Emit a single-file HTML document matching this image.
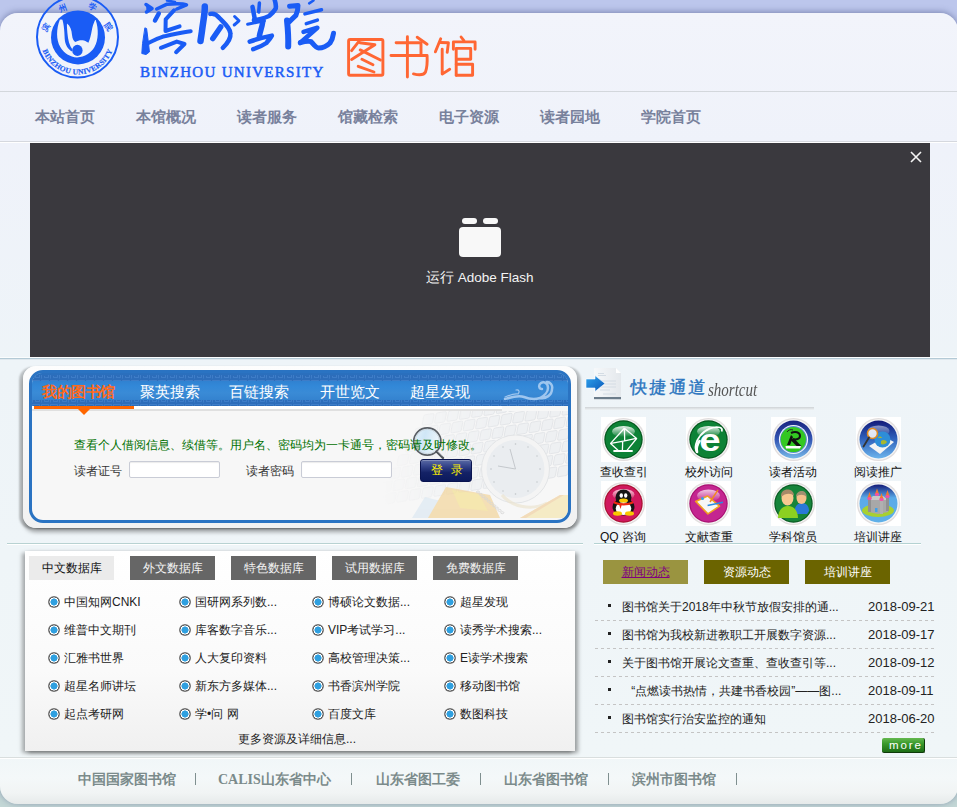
<!DOCTYPE html>
<html><head><meta charset="utf-8">
<style>
*{margin:0;padding:0;box-sizing:border-box}
html,body{width:957px;height:807px;overflow:hidden}
body{position:relative;font-family:"Liberation Sans",sans-serif;background:linear-gradient(#bcc6ec 0,#bcc6ec 300px,#c8d8dc 600px,#c3d7d6 807px)}
.abs{position:absolute}
#panel{position:absolute;left:0;top:13px;width:958px;height:791px;border-radius:18px;background:linear-gradient(#f2f4fb 0,#eff2fa 129px,#eef4f8 345px,#f0f6f8 740px,#f4f8f9 765px,#f1f4f4 780px,#e6eaea 791px);box-shadow:0 -1px 6px rgba(60,70,120,.5)}
#nav{position:absolute;left:0;top:91px;width:957px;height:52px;border-top:1px solid #d3d7dc;border-bottom:1px solid #fff;box-shadow:inset 0 -1px 0 #d5d8de}
.nv{position:absolute;top:108px;font-size:15px;font-weight:bold;color:#78819c;line-height:17px;white-space:nowrap}
#flash{position:absolute;left:30px;top:143px;width:900px;height:214px;background:#3a393e}

.t12{font-size:12px;line-height:14px;white-space:nowrap}
#login{position:absolute;left:23px;top:366px;width:554px;height:162px;border-radius:13px;background:linear-gradient(#fdfdfd,#f1f1f1);box-shadow:-4px 1px 2px rgba(0,0,0,.2),4px 1px 2px rgba(0,0,0,.2),0 4px 4px rgba(0,0,0,.35)}
#lframe{position:absolute;left:29px;top:370px;width:542px;height:153px;border:3px solid #2a73c2;border-radius:14px;background:#f7f7f7;overflow:hidden}
#lhead{position:absolute;left:0;top:0;width:536px;height:33px;background:linear-gradient(#2c78c6 0,#3288d8 40%,#3a8bd6 60%,#2f7bc9 100%)}
.lt{position:absolute;top:11px;font-size:14.5px;line-height:17px;color:#fff;white-space:nowrap}
.inp{position:absolute;height:17px;border:1px solid #c9ccd6;border-radius:2px;background:#fff;box-shadow:inset 0 1px 1px rgba(0,0,0,.08)}
.qi{position:absolute;width:45px;height:45px;background:#fff}
.ql{position:absolute;font-size:12px;line-height:14px;color:#111;white-space:nowrap}
#dbox{position:absolute;left:25px;top:551px;width:550px;height:200px;background:linear-gradient(#fff 0,#fafafa 60%,#f0f0f0 100%);box-shadow:3px 2px 4px rgba(0,0,0,.35),-3px 2px 4px rgba(0,0,0,.3)}
.dt{position:absolute;top:556px;width:85px;height:24px;background:#666;color:#f4f4f4;font-size:12px;line-height:24px;text-align:center;white-space:nowrap}
.dr{position:absolute;width:12px;height:12px;border-radius:50%;background:radial-gradient(circle,#2fa0e0 0,#2fa0e0 3.3px,#fff 3.8px,#fff 4.3px,#555 4.8px,#888 6px)}
.dl{position:absolute;font-size:12px;line-height:14px;color:#222;white-space:nowrap}
.nt{position:absolute;top:560px;width:85px;height:24px;background:#6b6400;color:#fff;font-size:12px;line-height:24px;text-align:center;white-space:nowrap}
.nr{position:absolute;left:595px;width:340px;height:1px;background:repeating-linear-gradient(90deg,#c4c4c4 0,#c4c4c4 3px,transparent 3px,transparent 6px)}
.nb{position:absolute;left:608px;width:3px;height:3px;background:#222}
.nx{position:absolute;left:622px;font-size:12px;line-height:14px;color:#222;white-space:nowrap}
.nd{position:absolute;left:868px;font-size:13px;line-height:15px;color:#222;white-space:nowrap}
.ft{position:absolute;top:772px;font-family:"Liberation Serif",serif;font-size:14px;font-weight:bold;line-height:16px;color:#7b8b8b;white-space:nowrap}
.fs{position:absolute;top:773px;width:1px;height:12px;background:#7f8f8f}
</style></head><body>
<div id="panel"></div>
<div id="nav"></div>
<div class="nv" style="left:35px">本站首页</div>
<div class="nv" style="left:136px">本馆概况</div>
<div class="nv" style="left:237px">读者服务</div>
<div class="nv" style="left:338px">馆藏检索</div>
<div class="nv" style="left:439px">电子资源</div>
<div class="nv" style="left:540px">读者园地</div>
<div class="nv" style="left:641px">学院首页</div>


<!-- logo -->
<svg class="abs" style="left:30px;top:-8px" width="100" height="92" viewBox="30 -8 100 92">
 <circle cx="77.5" cy="37" r="40.5" fill="none" stroke="#1a5cf5" stroke-width="2"/>
 <circle cx="78" cy="37.4" r="27" fill="#1a5cf5"/>
 <clipPath id="dclip"><circle cx="78" cy="37.4" r="26.5"/></clipPath><g clip-path="url(#dclip)"><path d="M59.9 19.5 C56.2 29 56 40 60.3 46.9 C64 53 70 57 77 57.4 C85 57 91 53 94.5 47 C98.5 40 98.8 29 95.7 19.9 Z" fill="#eef1fa"/>
 <path d="M61 16 C63.8 22 64.4 30 64.7 38.8 C65.1 45 67.8 49 71.8 51.5 L72.4 49.5 C69.4 45.5 68 40 67.4 33 C67 28 66.8 25.5 67 23.6 L69 16Z" fill="#1a5cf5"/>
 <path d="M67 23.6 C70.2 26 71.6 30 72 35 C72.4 39 73.8 41.2 75.6 42 C78 40.2 81 39.8 84 40.4 C86 41 87.4 42 88.4 42.8 C90 39 91 35 91.8 30.5 C92.4 27 93.2 24 95.5 19 L96 12 L63 12Z" fill="#1a5cf5"/>
 <ellipse cx="77.4" cy="50.4" rx="5.2" ry="5.6" fill="#1a5cf5"/></g>
 <g fill="#1a5cf5" font-family="Liberation Serif" font-size="7.5" font-weight="bold" stroke="#1a5cf5" stroke-width="0.2"><text x="43.53" y="52.89" transform="rotate(64.9 43.53 52.89)" text-anchor="middle">B</text><text x="45.57" y="56.67" transform="rotate(58.4 45.57 56.67)" text-anchor="middle">I</text><text x="48.15" y="60.34" transform="rotate(51.5 48.15 60.34)" text-anchor="middle">N</text><text x="51.91" y="64.41" transform="rotate(43.0 51.91 64.41)" text-anchor="middle">Z</text><text x="56.40" y="68.00" transform="rotate(34.2 56.40 68.00)" text-anchor="middle">H</text><text x="61.76" y="71.04" transform="rotate(24.8 61.76 71.04)" text-anchor="middle">O</text><text x="67.34" y="73.10" transform="rotate(15.7 67.34 73.10)" text-anchor="middle">U</text><text x="75.15" y="74.43" transform="rotate(3.6 75.15 74.43)" text-anchor="middle">U</text><text x="80.89" y="74.35" transform="rotate(-5.2 80.89 74.35)" text-anchor="middle">N</text><text x="85.33" y="73.67" transform="rotate(-12.1 85.33 73.67)" text-anchor="middle">I</text><text x="89.66" y="72.47" transform="rotate(-18.9 89.66 72.47)" text-anchor="middle">V</text><text x="94.75" y="70.30" transform="rotate(-27.4 94.75 70.30)" text-anchor="middle">E</text><text x="99.47" y="67.39" transform="rotate(-35.9 99.47 67.39)" text-anchor="middle">R</text><text x="103.40" y="64.12" transform="rotate(-43.7 103.40 64.12)" text-anchor="middle">S</text><text x="106.05" y="61.31" transform="rotate(-49.6 106.05 61.31)" text-anchor="middle">I</text><text x="108.64" y="57.89" transform="rotate(-56.1 108.64 57.89)" text-anchor="middle">T</text><text x="111.38" y="53.08" transform="rotate(-64.6 111.38 53.08)" text-anchor="middle">Y</text></g>
 <g fill="#1a5cf5" font-size="8" font-weight="bold" text-anchor="middle">
  <text x="46" y="30" transform="rotate(-55 46 27)">滨</text>
  <text x="62.5" y="11" transform="rotate(-20 62.5 8)">州</text>
  <text x="93" y="10" transform="rotate(20 93 7)">学</text>
  <text x="109" y="30" transform="rotate(55 109 27)">院</text>
 </g>
</svg>
<!-- calligraphy -->
<svg class="abs" style="left:136px;top:0" width="204" height="60" viewBox="136 0 204 60">
 <g fill="none" stroke="#1a5cf5" stroke-linecap="round" stroke-linejoin="round">
  <path d="M146 4.5 L152 8.5 L146.5 12" stroke-width="3.5" fill="#1a5cf5"/>
  <path d="M158.8 13.5 L155 20.5" stroke-width="4.5"/>
  <path d="M145.2 28 L146.6 28.5 L148.6 44 L149.4 52 L146 54.5 L141.8 53.5 L142.5 44Z" stroke-width="1" fill="#1a5cf5"/>
  <path d="M148.4 43 C155 40 160 37 165.7 36 C175 34 183 32 190.7 31.2" stroke-width="4"/>
  <path d="M167 0.5 L175 2"  stroke-width="2.5"/>
  <path d="M156.7 9 L167 4.2 C176 3.5 183 3.5 186.5 4.9 L176.8 9" stroke-width="3.5"/>
  <path d="M174 10.4 L165.7 19.4 L165.5 31 L179.6 26.4" stroke-width="4"/>
  <path d="M160.9 47.8 L176.8 41.6 L184.5 44 L176.1 52.2" stroke-width="4"/>
  <path d="M204.8 6.5 C205 14 203 22 202 31 L200.5 41" stroke-width="6.5"/>
  <path d="M210.3 13.9 C214 13 217 15 219.4 18 C225 24 230 28 230.4 33.3 C231 38 229 42 222.8 47.8" stroke-width="4.5"/>
  <path d="M220.7 27 L212.8 38.5" stroke-width="5.5"/>
  <path d="M234.6 16.5 L239 20.8 L234.2 25" stroke-width="3"/>
  <path d="M252.5 6.9 L254.6 18" stroke-width="4.5"/>
  <path d="M259.4 3 L258.7 12" stroke-width="3.5"/>
  <path d="M274.7 0 C276 4 276 8 275.4 9 C273 13 270 15 269.1 16 C262 19 257 20 253.9 20.1" stroke-width="4.5"/>
  <path d="M247.6 24.3 L264.3 20.8" stroke-width="3"/>
  <path d="M262.9 21 C262 28 260 32 259.4 36" stroke-width="5.5"/>
  <path d="M249.7 41.6 C257 39 265 37 271.9 35.6 C270 39 268 41 266.4 43 C262 46 257 48 253.2 49.2" stroke-width="4.5"/>
  <path d="M289.6 6.2 L298 5.5 C298 10 297 13 295.9 15.3 C293 18 291 20 289.6 21.5" stroke-width="5"/>
  <path d="M287 20.5 C288 30 288.5 38 288.2 46.5" stroke-width="6"/>
  <path d="M313.5 0.5 L309.2 3.4" stroke-width="2.5"/>
  <path d="M304.9 13.9 L321.5 9.7" stroke-width="3.5"/>
  <path d="M306.3 23.6 L317.4 20.1" stroke-width="3.5"/>
  <path d="M303.5 31.9 L317.4 27.7 L300 43" stroke-width="4.5"/>
  <path d="M300.5 42.5 C306 41 309 41 311.1 41.6 C314 45 316 48 318.5 48 C323 48 327 46 330 43 C332 40 333 37 333.5 33.3" stroke-width="5"/>
 </g>
</svg>
<div class="abs" style="left:140px;top:64px;font-family:'Liberation Serif',serif;font-size:15px;line-height:17px;color:#1a5cf5;letter-spacing:1.3px;-webkit-text-stroke:0.5px #1a5cf5;white-space:nowrap">BINZHOU UNIVERSITY</div>
<svg class="abs" style="left:340px;top:30px" width="145" height="52" viewBox="340 30 145 52">
 <g fill="none" stroke="#ff6633" stroke-width="2.9" stroke-linecap="round" stroke-linejoin="round">
  <rect x="348.6" y="39.5" width="34.3" height="35.8" rx="1.5"/>
  <path d="M358.9 41.4 L351.6 50.6"/>
  <path d="M359.9 42.8 L374.9 44.7 L351.6 59.5"/>
  <path d="M360.2 49.9 L380.4 60"/>
  <path d="M361.9 59.3 L373 64.7"/>
  <path d="M358.2 66.3 L374 72"/>
  <path d="M396.1 42.8 H421 V55.5"/>
  <path d="M391 55.5 H427.1 C427.4 62 427 68 425.5 72 C424 75 420 75.5 413.5 73.9"/>
  <path d="M407.4 36.7 V77.1"/>
  <path d="M417.2 37.2 L427.1 44.2"/>
  <path d="M440.7 38.8 L435.4 51.8"/>
  <path d="M440.7 42.5 L448.4 42.8 L447.2 52.4"/>
  <path d="M442.2 49.3 V74.1 L449.7 69.2"/>
  <path d="M461.1 37 L463.9 40.7"/>
  <path d="M453.4 49.3 V41.9 H475.1 V49.3"/>
  <path d="M456.2 75.3 V48.4 H470.7 V59.2 H456.2"/>
  <path d="M456.2 64.2 H472.6 V75.3 H456.2"/>
 </g>
</svg>
<div class="abs" style="left:0;top:357px;width:957px;height:1px;background:#fbfdfe"></div><div class="abs" style="left:0;top:358px;width:957px;height:1px;background:#b4cad6"></div><div class="abs" style="left:0;top:359px;width:957px;height:1px;background:#dfe8ee"></div>
<div id="flash">
 <div class="abs" style="left:429px;top:84px;width:42px;height:30px;border-radius:4px;background:#f8f8f8"></div>
 <div class="abs" style="left:432px;top:75px;width:15px;height:6px;border-radius:3px;background:#f8f8f8"></div>
 <div class="abs" style="left:453px;top:75px;width:15px;height:6px;border-radius:3px;background:#f8f8f8"></div>
 <div class="abs" style="left:396px;top:127px;font-size:13.5px;line-height:16px;color:#f4f4f4;white-space:nowrap">运行 Adobe Flash</div>
 <svg class="abs" style="left:880px;top:8px" width="12" height="12" viewBox="0 0 12 12"><path d="M1 1L11 11M11 1L1 11" stroke="#f4f4f4" stroke-width="1.6"/></svg>
</div>


<!-- login -->
<div id="login"></div>
<div id="lframe">
 <div id="lhead">
  <svg class="abs" style="left:0;top:0" width="536" height="33">
   <defs>
    <pattern id="mea" width="9" height="6" patternUnits="userSpaceOnUse">
     <rect width="9" height="6" fill="#2d6dba"/><path d="M0.5 5.5V1.5H7.5V4.5H3.5V3" fill="none" stroke="#4282cc" stroke-width="0.8"/>
    </pattern>
   </defs>
   <rect x="0" y="0" width="536" height="2" fill="#2a6fbd"/>
   <rect x="0" y="2" width="536" height="6" fill="url(#mea)"/>
   <rect x="0" y="27" width="536" height="6" fill="url(#mea)"/>
   <path d="M473 26 C480 24 486 22 492 24 C497 26 502 27 508 25 C512 23 516 19 516 15 C516 10 512 8 509 10 C506 12 507 16 510 16 M508 25 C514 26 520 22 520 16 C521 12 518 9 515 9" fill="none" stroke="#9ec6ef" stroke-width="2.5" stroke-linecap="round"/>
   <path d="M473 24 C478 22 482 20 486 21 C488 19 487 16 484 17" fill="none" stroke="#9ec6ef" stroke-width="1.2" stroke-linecap="round"/>
  </svg>
  <div class="lt" style="left:10px;top:11px;color:#ff6a1a;font-weight:bold;letter-spacing:-0.4px">我的图书馆</div>
  <div class="lt" style="left:108px">聚英搜索</div>
  <div class="lt" style="left:197px">百链搜索</div>
  <div class="lt" style="left:288px">开世览文</div>
  <div class="lt" style="left:378px">超星发现</div>
 </div>
 <div class="abs" style="left:0;top:33px;width:470px;height:3px;background:#fff"></div>
 <div class="abs" style="left:0;top:36px;width:470px;height:2px;background:#e0e0e0"></div>
 <div class="abs" style="left:2px;top:33px;width:100px;height:3px;background:#ff6600"></div>
 <div class="abs" style="left:46px;top:36px;width:0;height:0;border-left:6px solid transparent;border-right:6px solid transparent;border-top:6px solid #ff6600"></div>
 <!-- background picture -->
 <svg class="abs" style="left:0;top:38px" width="536" height="115">
  <defs><linearGradient id="kbm" gradientUnits="userSpaceOnUse" x1="350" y1="0" x2="470" y2="0"><stop offset="0" stop-color="#fff" stop-opacity="0"/><stop offset="1" stop-color="#fff" stop-opacity="1"/></linearGradient><mask id="kmask"><rect x="0" y="0" width="536" height="115" fill="url(#kbm)"/></mask></defs>
  <g mask="url(#kmask)"><g transform="translate(392 4) rotate(-9) skewX(-20)" fill="#eef0f2" stroke="#e0e3e6" stroke-width="0.8"><rect x="0.0" y="0" width="10.5" height="10" rx="1.5"/><rect x="12.5" y="0" width="10.5" height="10" rx="1.5"/><rect x="25.0" y="0" width="10.5" height="10" rx="1.5"/><rect x="37.5" y="0" width="10.5" height="10" rx="1.5"/><rect x="50.0" y="0" width="10.5" height="10" rx="1.5"/><rect x="62.5" y="0" width="10.5" height="10" rx="1.5"/><rect x="75.0" y="0" width="10.5" height="10" rx="1.5"/><rect x="87.5" y="0" width="10.5" height="10" rx="1.5"/><rect x="100.0" y="0" width="10.5" height="10" rx="1.5"/><rect x="112.5" y="0" width="10.5" height="10" rx="1.5"/><rect x="125.0" y="0" width="10.5" height="10" rx="1.5"/><rect x="137.5" y="0" width="10.5" height="10" rx="1.5"/><rect x="150.0" y="0" width="10.5" height="10" rx="1.5"/><rect x="162.5" y="0" width="10.5" height="10" rx="1.5"/><rect x="175.0" y="0" width="10.5" height="10" rx="1.5"/><rect x="187.5" y="0" width="10.5" height="10" rx="1.5"/><rect x="-6.0" y="12" width="10.5" height="10" rx="1.5"/><rect x="6.5" y="12" width="10.5" height="10" rx="1.5"/><rect x="19.0" y="12" width="10.5" height="10" rx="1.5"/><rect x="31.5" y="12" width="10.5" height="10" rx="1.5"/><rect x="44.0" y="12" width="10.5" height="10" rx="1.5"/><rect x="56.5" y="12" width="10.5" height="10" rx="1.5"/><rect x="69.0" y="12" width="10.5" height="10" rx="1.5"/><rect x="81.5" y="12" width="10.5" height="10" rx="1.5"/><rect x="94.0" y="12" width="10.5" height="10" rx="1.5"/><rect x="106.5" y="12" width="10.5" height="10" rx="1.5"/><rect x="119.0" y="12" width="10.5" height="10" rx="1.5"/><rect x="131.5" y="12" width="10.5" height="10" rx="1.5"/><rect x="144.0" y="12" width="10.5" height="10" rx="1.5"/><rect x="156.5" y="12" width="10.5" height="10" rx="1.5"/><rect x="169.0" y="12" width="10.5" height="10" rx="1.5"/><rect x="181.5" y="12" width="10.5" height="10" rx="1.5"/><rect x="-12.0" y="24" width="10.5" height="10" rx="1.5"/><rect x="0.5" y="24" width="10.5" height="10" rx="1.5"/><rect x="13.0" y="24" width="10.5" height="10" rx="1.5"/><rect x="25.5" y="24" width="10.5" height="10" rx="1.5"/><rect x="38.0" y="24" width="10.5" height="10" rx="1.5"/><rect x="50.5" y="24" width="10.5" height="10" rx="1.5"/><rect x="63.0" y="24" width="10.5" height="10" rx="1.5"/><rect x="75.5" y="24" width="10.5" height="10" rx="1.5"/><rect x="88.0" y="24" width="10.5" height="10" rx="1.5"/><rect x="100.5" y="24" width="10.5" height="10" rx="1.5"/><rect x="113.0" y="24" width="10.5" height="10" rx="1.5"/><rect x="125.5" y="24" width="10.5" height="10" rx="1.5"/><rect x="138.0" y="24" width="10.5" height="10" rx="1.5"/><rect x="150.5" y="24" width="10.5" height="10" rx="1.5"/><rect x="163.0" y="24" width="10.5" height="10" rx="1.5"/><rect x="175.5" y="24" width="10.5" height="10" rx="1.5"/><rect x="-18.0" y="36" width="10.5" height="10" rx="1.5"/><rect x="-5.5" y="36" width="10.5" height="10" rx="1.5"/><rect x="7.0" y="36" width="10.5" height="10" rx="1.5"/><rect x="19.5" y="36" width="10.5" height="10" rx="1.5"/><rect x="32.0" y="36" width="10.5" height="10" rx="1.5"/><rect x="44.5" y="36" width="10.5" height="10" rx="1.5"/><rect x="57.0" y="36" width="10.5" height="10" rx="1.5"/><rect x="69.5" y="36" width="10.5" height="10" rx="1.5"/><rect x="82.0" y="36" width="10.5" height="10" rx="1.5"/><rect x="94.5" y="36" width="10.5" height="10" rx="1.5"/><rect x="107.0" y="36" width="10.5" height="10" rx="1.5"/><rect x="119.5" y="36" width="10.5" height="10" rx="1.5"/><rect x="132.0" y="36" width="10.5" height="10" rx="1.5"/><rect x="144.5" y="36" width="10.5" height="10" rx="1.5"/><rect x="157.0" y="36" width="10.5" height="10" rx="1.5"/><rect x="169.5" y="36" width="10.5" height="10" rx="1.5"/><rect x="-24.0" y="48" width="10.5" height="10" rx="1.5"/><rect x="-11.5" y="48" width="10.5" height="10" rx="1.5"/><rect x="1.0" y="48" width="10.5" height="10" rx="1.5"/><rect x="13.5" y="48" width="10.5" height="10" rx="1.5"/><rect x="26.0" y="48" width="10.5" height="10" rx="1.5"/><rect x="38.5" y="48" width="10.5" height="10" rx="1.5"/><rect x="51.0" y="48" width="10.5" height="10" rx="1.5"/><rect x="63.5" y="48" width="10.5" height="10" rx="1.5"/><rect x="76.0" y="48" width="10.5" height="10" rx="1.5"/><rect x="88.5" y="48" width="10.5" height="10" rx="1.5"/><rect x="101.0" y="48" width="10.5" height="10" rx="1.5"/><rect x="113.5" y="48" width="10.5" height="10" rx="1.5"/><rect x="126.0" y="48" width="10.5" height="10" rx="1.5"/><rect x="138.5" y="48" width="10.5" height="10" rx="1.5"/><rect x="151.0" y="48" width="10.5" height="10" rx="1.5"/><rect x="163.5" y="48" width="10.5" height="10" rx="1.5"/><rect x="-30.0" y="60" width="10.5" height="10" rx="1.5"/><rect x="-17.5" y="60" width="10.5" height="10" rx="1.5"/><rect x="-5.0" y="60" width="10.5" height="10" rx="1.5"/><rect x="7.5" y="60" width="10.5" height="10" rx="1.5"/><rect x="20.0" y="60" width="10.5" height="10" rx="1.5"/><rect x="32.5" y="60" width="10.5" height="10" rx="1.5"/><rect x="45.0" y="60" width="10.5" height="10" rx="1.5"/><rect x="57.5" y="60" width="10.5" height="10" rx="1.5"/><rect x="70.0" y="60" width="10.5" height="10" rx="1.5"/><rect x="82.5" y="60" width="10.5" height="10" rx="1.5"/><rect x="95.0" y="60" width="10.5" height="10" rx="1.5"/><rect x="107.5" y="60" width="10.5" height="10" rx="1.5"/><rect x="120.0" y="60" width="10.5" height="10" rx="1.5"/><rect x="132.5" y="60" width="10.5" height="10" rx="1.5"/><rect x="145.0" y="60" width="10.5" height="10" rx="1.5"/><rect x="157.5" y="60" width="10.5" height="10" rx="1.5"/><rect x="-36.0" y="72" width="10.5" height="10" rx="1.5"/><rect x="-23.5" y="72" width="10.5" height="10" rx="1.5"/><rect x="-11.0" y="72" width="10.5" height="10" rx="1.5"/><rect x="1.5" y="72" width="10.5" height="10" rx="1.5"/><rect x="14.0" y="72" width="10.5" height="10" rx="1.5"/><rect x="26.5" y="72" width="10.5" height="10" rx="1.5"/><rect x="39.0" y="72" width="10.5" height="10" rx="1.5"/><rect x="51.5" y="72" width="10.5" height="10" rx="1.5"/><rect x="64.0" y="72" width="10.5" height="10" rx="1.5"/><rect x="76.5" y="72" width="10.5" height="10" rx="1.5"/><rect x="89.0" y="72" width="10.5" height="10" rx="1.5"/><rect x="101.5" y="72" width="10.5" height="10" rx="1.5"/><rect x="114.0" y="72" width="10.5" height="10" rx="1.5"/><rect x="126.5" y="72" width="10.5" height="10" rx="1.5"/><rect x="139.0" y="72" width="10.5" height="10" rx="1.5"/><rect x="151.5" y="72" width="10.5" height="10" rx="1.5"/></g></g>
  <circle cx="483.5" cy="58" r="34" fill="#f4f4f4" stroke="#e2e4e6" stroke-width="1"/>
  <circle cx="483.5" cy="58" r="29" fill="#eaedf0"/>
  <path d="M483.5 58 L478 38 M483.5 58 L466 55" stroke="#c4c8cc" stroke-width="1"/>
  <g fill="#c0c4c8"><circle cx="483.5" cy="33" r="0.8"/><circle cx="508" cy="58" r="0.8"/><circle cx="483.5" cy="83" r="0.8"/><circle cx="459" cy="58" r="0.8"/><circle cx="496" cy="36" r="0.7"/><circle cx="505" cy="45" r="0.7"/><circle cx="505" cy="71" r="0.7"/><circle cx="496" cy="80" r="0.7"/><circle cx="471" cy="80" r="0.7"/><circle cx="462" cy="71" r="0.7"/><circle cx="462" cy="45" r="0.7"/><circle cx="471" cy="36" r="0.7"/></g>
  <defs><filter id="soft"><feGaussianBlur stdDeviation="0.7"/></filter></defs><g opacity="0.7" filter="url(#soft)"><path d="M380 107 L393 86 L428 95 L423 107Z" fill="#dce8f2"/>
  <path d="M396 107 L414 76 L458 84 L468 107Z" fill="#f2d49a"/>
  <path d="M420 79 L447 83 L456 100 L428 97Z" fill="#f4e090"/>
  <ellipse cx="446.0" cy="81.0" rx="1.6" ry="1" fill="none" stroke="#c8c8c8" stroke-width="0.8"/><ellipse cx="448.7" cy="83.3" rx="1.6" ry="1" fill="none" stroke="#c8c8c8" stroke-width="0.8"/><ellipse cx="451.4" cy="85.6" rx="1.6" ry="1" fill="none" stroke="#c8c8c8" stroke-width="0.8"/><ellipse cx="454.1" cy="87.9" rx="1.6" ry="1" fill="none" stroke="#c8c8c8" stroke-width="0.8"/><ellipse cx="456.8" cy="90.2" rx="1.6" ry="1" fill="none" stroke="#c8c8c8" stroke-width="0.8"/><ellipse cx="459.5" cy="92.5" rx="1.6" ry="1" fill="none" stroke="#c8c8c8" stroke-width="0.8"/><ellipse cx="462.2" cy="94.8" rx="1.6" ry="1" fill="none" stroke="#c8c8c8" stroke-width="0.8"/><ellipse cx="464.9" cy="97.1" rx="1.6" ry="1" fill="none" stroke="#c8c8c8" stroke-width="0.8"/><ellipse cx="467.6" cy="99.4" rx="1.6" ry="1" fill="none" stroke="#c8c8c8" stroke-width="0.8"/><ellipse cx="470.3" cy="101.7" rx="1.6" ry="1" fill="none" stroke="#c8c8c8" stroke-width="0.8"/>
  <path d="M470 84 C480 96 500 100 515 92" fill="none" stroke="#ece4d0" stroke-width="3"/>
  <path d="M488 107 L528 84 L536 84 L536 107Z" fill="#f4e6b0"/>
  <path d="M488 107 L528 84 L532 84 L494 107Z" fill="#f0cfa0"/></g>
 </svg>
</div>
<svg class="abs" style="left:408px;top:422px" width="42" height="42">
 <defs><linearGradient id="mg" x1="0" y1="0" x2="1" y2="0.3"><stop offset="0" stop-color="#e6f4fc"/><stop offset="0.45" stop-color="#cfe6f6"/><stop offset="1" stop-color="#eef6fb"/></linearGradient></defs>
 <circle cx="19.3" cy="19.5" r="13.6" fill="url(#mg)" stroke="#5a5e64" stroke-width="1.6"/>
 <circle cx="19.3" cy="19.5" r="12.2" fill="none" stroke="#c8d0d8" stroke-width="0.8"/>
 <path d="M28.5 29.5 L35 36" stroke="#50545a" stroke-width="2.4" stroke-linecap="round"/>
 <path d="M29.5 29 L35 34.5" stroke="#e0e4e8" stroke-width="0.7"/>
</svg>
<div class="t12 abs" style="left:74px;top:438px;color:#007000">查看个人借阅信息、续借等。用户名、密码均为一卡通号，密码请及时修改。</div>
<div class="t12 abs" style="left:74px;top:464px;color:#333">读者证号</div>
<div class="t12 abs" style="left:246px;top:464px;color:#333">读者密码</div>
<div class="inp" style="left:129px;top:461px;width:91px"></div>
<div class="inp" style="left:301px;top:461px;width:91px"></div>

<div class="abs" style="left:420px;top:459px;width:52px;height:23px;border:1px solid #0a1450;border-radius:3px;background:linear-gradient(#5a6aa4 0,#34448a 30%,#142266 60%,#0c1a5c 100%);box-shadow:inset 0 1px 0 rgba(255,255,255,.25);color:#fff200;font-size:12px;line-height:21px;text-align:left;white-space:nowrap;letter-spacing:8px;padding-left:10px">登录</div>

<!-- quick links -->
<svg class="abs" style="left:585px;top:367px" width="38" height="34">
 <defs><linearGradient id="arw" x1="0" y1="0" x2="1" y2="1"><stop offset="0" stop-color="#2ea4ee"/><stop offset="1" stop-color="#0a56b8"/></linearGradient>
 <linearGradient id="pg" x1="0" y1="0" x2="1" y2="0"><stop offset="0" stop-color="#f6f8fa"/><stop offset="1" stop-color="#e4e8ec"/></linearGradient></defs>
 <path d="M9 1 H31 L36 6 V33 H9Z" fill="url(#pg)"/>
 <path d="M31 1 L36 6 H31Z" fill="#fff"/>
 <rect x="9" y="30" width="27" height="2.2" fill="#6c7c8a"/>
 <path d="M13 6.5H19M13 8.5H21M16 14H31M16 17H31M16 20H31M15 23H25M18 27H31" stroke="#d4dce4" stroke-width="1.2"/>
 <path d="M1 12 H10 V8.6 L20 16.6 L10 24.5 V21 H1Z" fill="url(#arw)" stroke="#fff" stroke-width="0.6"/>
</svg>
<div class="abs" style="left:630px;top:377px;font-size:17px;line-height:22px;color:#2a74bf;-webkit-text-stroke:0.4px #2a74bf;letter-spacing:2.5px;white-space:nowrap;transform:skewX(-4deg)">快捷通道</div>
<div class="abs" style="left:708px;top:382px;font-family:'Liberation Serif',serif;font-style:italic;font-size:15px;line-height:18px;transform:scaleY(1.25);transform-origin:0 80%;color:#555;white-space:nowrap">shortcut</div>
<div class="abs" style="left:585px;top:407px;width:229px;height:3px;background:linear-gradient(#cfd3d6,#eef2f4)"></div>
<svg class="qi" style="left:601px;top:417px" width="45" height="45"><rect width="45" height="45" fill="#fff"/><circle cx="22.5" cy="22.5" r="21.6" fill="#e2dede"/><circle cx="22.5" cy="22.5" r="20.2" fill="#f6f6f6"/><circle cx="22.5" cy="22.5" r="19.2" fill="#05561d"/><circle cx="22.5" cy="22.5" r="18" fill="#0d8236"/><defs><linearGradient id="h1" x1="0" y1="0" x2="0" y2="1"><stop offset="0" stop-color="#fff" stop-opacity="0.9"/><stop offset="1" stop-color="#fff" stop-opacity="0"/></linearGradient></defs><ellipse cx="22.5" cy="14.5" rx="11.5" ry="5.5" fill="url(#h1)"/>
<g fill="none" stroke="#fff" stroke-width="1.3" stroke-linejoin="round">
<path d="M23.4 11.2 L35.6 21.5 L26 33.3 M23.4 11.2 L9.6 26.4 L17 33.3"/>
<path d="M23.4 11.2 L23.7 23.8 L35.2 21.4 M10 26.3 L23.7 23.8 M21.7 24.5 L21.4 33.3"/>
</g><rect x="12.4" y="33" width="19.3" height="2" fill="#fff"/></svg>
<div class="ql" style="left:600px;top:465px">查收查引</div>
<svg class="qi" style="left:686px;top:417px" width="45" height="45"><rect width="45" height="45" fill="#fff"/><circle cx="22.5" cy="22.5" r="21.6" fill="#e2dede"/><circle cx="22.5" cy="22.5" r="20.2" fill="#f6f6f6"/><circle cx="22.5" cy="22.5" r="19.2" fill="#05561d"/><circle cx="22.5" cy="22.5" r="18" fill="#0d8236"/><defs><linearGradient id="h2" x1="0" y1="0" x2="0" y2="1"><stop offset="0" stop-color="#fff" stop-opacity="0.9"/><stop offset="1" stop-color="#fff" stop-opacity="0"/></linearGradient></defs><ellipse cx="22.5" cy="14.5" rx="11.5" ry="5.5" fill="url(#h2)"/>
<path d="M11 35 C8 31 10 24 14 19 C19 12 28 9 34 10.5 C36 11 36.5 13 35.5 14.5" fill="none" stroke="#fff" stroke-width="1.8"/>
<path d="M11 35 C10 31 11.5 27 13.5 24" fill="none" stroke="#fff" stroke-width="2.6" stroke-linecap="round"/>
<text x="0" y="0" transform="translate(24 33.5) scale(1.2 1)" font-family="Liberation Sans" font-weight="bold" font-size="32" fill="#fff" text-anchor="middle">e</text></svg>
<div class="ql" style="left:685px;top:465px">校外访问</div>
<svg class="qi" style="left:771px;top:417px" width="45" height="45"><rect width="45" height="45" fill="#fff"/><circle cx="22.5" cy="22.5" r="21.6" fill="#e2dede"/><circle cx="22.5" cy="22.5" r="20.2" fill="#f6f6f6"/>
<defs><linearGradient id="g3" x1="0" y1="0" x2="0" y2="1"><stop offset="0" stop-color="#1a2480"/><stop offset="0.5" stop-color="#3456b4"/><stop offset="1" stop-color="#78b8e8"/></linearGradient></defs>
<circle cx="22.5" cy="22.5" r="19" fill="url(#g3)"/>
<circle cx="22.5" cy="22.5" r="14.6" fill="#f2f6fb"/><circle cx="22.5" cy="22.5" r="13.4" fill="#5a8ed0"/>
<circle cx="22.3" cy="22.5" r="12.6" fill="#33c822"/>
<path d="M16 28 L20 18 L22 20 L19 28Z" fill="#111"/>
<path d="M20 16 C24 14 29 15 29 19 C29 22 25 23 22 22 L28 28 L26 28 L20 22" fill="none" stroke="#111" stroke-width="2"/>
<path d="M16 15 C17 13 20 12 22 13" fill="none" stroke="#222" stroke-width="1"/>
<path d="M14.5 29 H30 L29 31.5 H15Z" fill="#fff"/></svg>
<div class="ql" style="left:769px;top:465px">读者活动</div>
<svg class="qi" style="left:856px;top:417px" width="45" height="45"><rect width="45" height="45" fill="#fff"/><circle cx="22.5" cy="22.5" r="21.6" fill="#e2dede"/><circle cx="22.5" cy="22.5" r="20.2" fill="#f6f6f6"/>
<defs><linearGradient id="g4" x1="0" y1="0" x2="0" y2="1"><stop offset="0" stop-color="#141a78"/><stop offset="0.45" stop-color="#2c5cb8"/><stop offset="1" stop-color="#6cb4ec"/></linearGradient></defs>
<circle cx="22.5" cy="22.5" r="19" fill="url(#g4)"/>
<defs><linearGradient id="h4" x1="0" y1="0" x2="0" y2="1"><stop offset="0" stop-color="#fff" stop-opacity="0.5"/><stop offset="1" stop-color="#fff" stop-opacity="0"/></linearGradient></defs><ellipse cx="22.5" cy="14" rx="11" ry="5.5" fill="url(#h4)"/>
<path d="M13 29 L29 20 L38 25 L24 37Z" fill="#f4f4f4"/>
<circle cx="26.5" cy="22.5" r="8" fill="#2e8ed8"/>
<path d="M25 24 C27 22 30 23 31 25 C30 27 27 28 25 27Z M22 21 C23 19 25 19 26 21" fill="#a8b830"/>
<circle cx="16.5" cy="16.5" r="5" fill="rgba(255,255,255,.85)" stroke="#e08a20" stroke-width="1.6"/>
<path d="M13 20.5 L7.5 29.5" stroke="#333" stroke-width="1.8" stroke-linecap="round"/></svg>
<div class="ql" style="left:854px;top:465px">阅读推广</div>
<svg class="qi" style="left:601px;top:481px" width="45" height="45"><rect width="45" height="45" fill="#fff"/><circle cx="22.5" cy="22.5" r="21.6" fill="#e2dede"/><circle cx="22.5" cy="22.5" r="20.2" fill="#f6f6f6"/><circle cx="22.5" cy="22.5" r="19.2" fill="#a81030"/><circle cx="22.5" cy="22.5" r="18" fill="#d0185e"/><defs><linearGradient id="h5" x1="0" y1="0" x2="0" y2="1"><stop offset="0" stop-color="#fff" stop-opacity="0.8"/><stop offset="1" stop-color="#fff" stop-opacity="0"/></linearGradient></defs><ellipse cx="22.5" cy="13.5" rx="11" ry="5.5" fill="url(#h5)"/>
<ellipse cx="22.5" cy="26" rx="11" ry="8.5" fill="#151515"/>
<ellipse cx="22.5" cy="16.5" rx="8" ry="8" fill="#151515"/>
<ellipse cx="22.5" cy="27.5" rx="7.8" ry="6.5" fill="#fff"/>
<path d="M13 20 C18 23 27 23 32 20 L32 22.5 C27 25 18 25 13 22.5Z" fill="#ee2a10"/>
<path d="M18 23 L19.5 28 L21 23Z" fill="#ee2a10"/>
<ellipse cx="22.5" cy="19.5" rx="4.5" ry="2" fill="#f8c800"/>
<ellipse cx="16.5" cy="32.5" rx="4.5" ry="2.2" fill="#f8c800"/>
<ellipse cx="28.5" cy="32.5" rx="4.5" ry="2.2" fill="#f8c800"/>
<ellipse cx="20.3" cy="14.5" rx="1.7" ry="2.3" fill="#fff"/><ellipse cx="24.7" cy="14.5" rx="1.7" ry="2.3" fill="#fff"/></svg>
<div class="ql" style="left:600px;top:530px">QQ 咨询</div>
<svg class="qi" style="left:686px;top:481px" width="45" height="45"><rect width="45" height="45" fill="#fff"/><circle cx="22.5" cy="22.5" r="21.6" fill="#e2dede"/><circle cx="22.5" cy="22.5" r="20.2" fill="#f6f6f6"/><circle cx="22.5" cy="22.5" r="19.2" fill="#a81070"/><circle cx="22.5" cy="22.5" r="18" fill="#c42590"/><defs><linearGradient id="h6" x1="0" y1="0" x2="0" y2="1"><stop offset="0" stop-color="#fff" stop-opacity="0.75"/><stop offset="1" stop-color="#fff" stop-opacity="0"/></linearGradient></defs><ellipse cx="22.5" cy="14.5" rx="11.5" ry="6" fill="url(#h6)"/>
<path d="M9.7 20.4 L21.6 15 L33.5 25.2 L21.9 32.9Z" fill="#f6f6f6" stroke="#f0a020" stroke-width="1.6" stroke-linejoin="round"/>
<path d="M32 8.8 L24 21" stroke="#f08a20" stroke-width="1.5"/>
<path d="M21.6 24.6 L37 21.3" stroke="#2a8ae0" stroke-width="1.5"/>
<circle cx="16.5" cy="17.5" r="1.5" fill="#30a0f0"/></svg>
<div class="ql" style="left:685px;top:530px">文献查重</div>
<svg class="qi" style="left:771px;top:481px" width="45" height="45"><rect width="45" height="45" fill="#fff"/><circle cx="22.5" cy="22.5" r="21.6" fill="#e2dede"/><circle cx="22.5" cy="22.5" r="20.2" fill="#f6f6f6"/><circle cx="22.5" cy="22.5" r="19.2" fill="#0a5a22"/><circle cx="22.5" cy="22.5" r="18" fill="#16843a"/>
<path d="M23.5 30 C24 25 27 22 31 22 C35 22 38 25 38 30 L36 33 L25 33Z" fill="#2a78d8"/>
<ellipse cx="30.5" cy="17" rx="5" ry="6" fill="#f4c08a"/>
<path d="M25 16 C25 11 29 9.5 32 10 C35 11 36 14 35.5 16 C33 13 28 13 25 16Z" fill="#a09070"/>
<path d="M7 37 C7 30 11 25 17 25 C23 25 27 30 27 37Z" fill="#8cd020"/>
<ellipse cx="16.5" cy="17" rx="6" ry="7.5" fill="#f8c890"/>
<path d="M10 16 C9.5 10 14 8 17.5 8.5 C21 9 23 11.5 23 15 C20 11.5 14 12 10 16Z" fill="#a88a68"/></svg>
<div class="ql" style="left:769px;top:530px">学科馆员</div>
<svg class="qi" style="left:856px;top:481px" width="45" height="45"><rect width="45" height="45" fill="#fff"/><circle cx="22.5" cy="22.5" r="21.6" fill="#e2dede"/><circle cx="22.5" cy="22.5" r="20.2" fill="#f6f6f6"/>
<defs><linearGradient id="g8" x1="0" y1="0" x2="0" y2="1"><stop offset="0" stop-color="#141a78"/><stop offset="0.35" stop-color="#5aaae8"/><stop offset="1" stop-color="#60b0e8"/></linearGradient></defs>
<circle cx="22.5" cy="22.5" r="19" fill="url(#g8)"/>
<ellipse cx="22" cy="29.5" rx="16" ry="6.5" fill="#a8d030"/>
<path d="M12.5 19 H32 V31 L22 33 L12.5 31Z" fill="#a8a8a8"/>
<path d="M12.5 19 H32 L27 15 H17Z" fill="#c8c8c8"/>
<rect x="12" y="17" width="3" height="14" fill="#909090"/><rect x="24" y="20" width="3" height="13" fill="#b0b0b0"/><rect x="30" y="16" width="3" height="14" fill="#909090"/>
<path d="M11.5 17 L13.5 11 L15.5 17Z M19 13 L21 7.5 L23 13Z M23.5 18 L25.5 12 L27.5 18Z M29.5 15 L31.5 9 L33.5 15Z" fill="#f07830"/>
<ellipse cx="13.5" cy="17.5" rx="2.2" ry="1.6" fill="#f050a8"/><ellipse cx="21" cy="13.5" rx="2.2" ry="1.6" fill="#f050a8"/><ellipse cx="25.5" cy="18.5" rx="2.2" ry="1.6" fill="#f050a8"/><ellipse cx="31.5" cy="15.5" rx="2.2" ry="1.6" fill="#f050a8"/>
<rect x="19" y="27" width="2.5" height="4" fill="#40a0e8"/></svg>
<div class="ql" style="left:854px;top:530px">培训讲座</div>
<div class="abs" style="left:594px;top:543px;width:327px;height:1px;background:#b4d2d2"></div><div class="abs" style="left:594px;top:544px;width:327px;height:1px;background:#fff"></div>

<div class="abs" style="left:7px;top:543px;width:576px;height:1px;background:#b8d2d2"></div><div class="abs" style="left:7px;top:544px;width:576px;height:1px;background:#fff"></div>
<div id="dbox"></div>
<div class="dt" style="left:29px;background:#ebebeb;color:#111">中文数据库</div>
<div class="dt" style="left:130px">外文数据库</div>
<div class="dt" style="left:231px">特色数据库</div>
<div class="dt" style="left:332px">试用数据库</div>
<div class="dt" style="left:433px">免费数据库</div>
<div class="dr" style="left:48px;top:596px"></div><div class="dl" style="left:64px;top:595px">中国知网CNKI</div>
<div class="dr" style="left:179px;top:596px"></div><div class="dl" style="left:195px;top:595px">国研网系列数...</div>
<div class="dr" style="left:312px;top:596px"></div><div class="dl" style="left:328px;top:595px">博硕论文数据...</div>
<div class="dr" style="left:444px;top:596px"></div><div class="dl" style="left:460px;top:595px">超星发现</div>
<div class="dr" style="left:48px;top:624px"></div><div class="dl" style="left:64px;top:623px">维普中文期刊</div>
<div class="dr" style="left:179px;top:624px"></div><div class="dl" style="left:195px;top:623px">库客数字音乐...</div>
<div class="dr" style="left:312px;top:624px"></div><div class="dl" style="left:328px;top:623px">VIP考试学习...</div>
<div class="dr" style="left:444px;top:624px"></div><div class="dl" style="left:460px;top:623px">读秀学术搜索...</div>
<div class="dr" style="left:48px;top:652px"></div><div class="dl" style="left:64px;top:651px">汇雅书世界</div>
<div class="dr" style="left:179px;top:652px"></div><div class="dl" style="left:195px;top:651px">人大复印资料</div>
<div class="dr" style="left:312px;top:652px"></div><div class="dl" style="left:328px;top:651px">高校管理决策...</div>
<div class="dr" style="left:444px;top:652px"></div><div class="dl" style="left:460px;top:651px">E读学术搜索</div>
<div class="dr" style="left:48px;top:680px"></div><div class="dl" style="left:64px;top:679px">超星名师讲坛</div>
<div class="dr" style="left:179px;top:680px"></div><div class="dl" style="left:195px;top:679px">新东方多媒体...</div>
<div class="dr" style="left:312px;top:680px"></div><div class="dl" style="left:328px;top:679px">书香滨州学院</div>
<div class="dr" style="left:444px;top:680px"></div><div class="dl" style="left:460px;top:679px">移动图书馆</div>
<div class="dr" style="left:48px;top:708px"></div><div class="dl" style="left:64px;top:707px">起点考研网</div>
<div class="dr" style="left:179px;top:708px"></div><div class="dl" style="left:195px;top:707px">学•问 网</div>
<div class="dr" style="left:312px;top:708px"></div><div class="dl" style="left:328px;top:707px">百度文库</div>
<div class="dr" style="left:444px;top:708px"></div><div class="dl" style="left:460px;top:707px">数图科技</div>
<div class="dl" style="left:238px;top:732px">更多资源及详细信息...</div>

<div class="nt" style="left:603px;background:#9a9440;color:#800080;text-decoration:underline">新闻动态</div>
<div class="nt" style="left:704px">资源动态</div>
<div class="nt" style="left:805px">培训讲座</div>
<div class="nb" style="top:604px"></div><div class="nx" style="top:600px">图书馆关于2018年中秋节放假安排的通...</div><div class="nd" style="top:599px">2018-09-21</div>
<div class="nb" style="top:632px"></div><div class="nx" style="top:628px">图书馆为我校新进教职工开展数字资源...</div><div class="nd" style="top:627px">2018-09-17</div>
<div class="nb" style="top:660px"></div><div class="nx" style="top:656px">关于图书馆开展论文查重、查收查引等...</div><div class="nd" style="top:655px">2018-09-12</div>
<div class="nb" style="top:688px"></div><div class="nx" style="top:684px;left:628px">&nbsp;“点燃读书热情，共建书香校园”——图...</div><div class="nd" style="top:683px">2018-09-11</div>
<div class="nb" style="top:716px"></div><div class="nx" style="top:712px">图书馆实行治安监控的通知</div><div class="nd" style="top:711px">2018-06-20</div>
<div class="nr" style="top:620px"></div><div class="nr" style="top:648px"></div><div class="nr" style="top:676px"></div><div class="nr" style="top:704px"></div><div class="nr" style="top:732px"></div>
<div class="abs" style="left:882px;top:738px;width:43px;height:15px;border-right:1px solid #0e3a0a;border-bottom:1px solid #0e3a0a;border-radius:2px;background:linear-gradient(#64b850,#3a9a2c 40%,#1e6e16);color:#fff;font-size:11.5px;line-height:14px;padding-left:7px;letter-spacing:1.9px;white-space:nowrap">more</div>

<div class="abs" style="left:0;top:757px;width:957px;height:1px;background:#d9dede"></div>
<div class="abs" style="left:0;top:758px;width:957px;height:1px;background:#fff"></div>
<div class="ft" style="left:78px">中国国家图书馆</div><div class="fs" style="left:195px"></div>
<div class="ft" style="left:218px">CALIS山东省中心</div><div class="fs" style="left:351px"></div>
<div class="ft" style="left:376px">山东省图工委</div><div class="fs" style="left:480px"></div>
<div class="ft" style="left:504px">山东省图书馆</div><div class="fs" style="left:608px"></div>
<div class="ft" style="left:632px">滨州市图书馆</div><div class="fs" style="left:736px"></div>
</body></html>
